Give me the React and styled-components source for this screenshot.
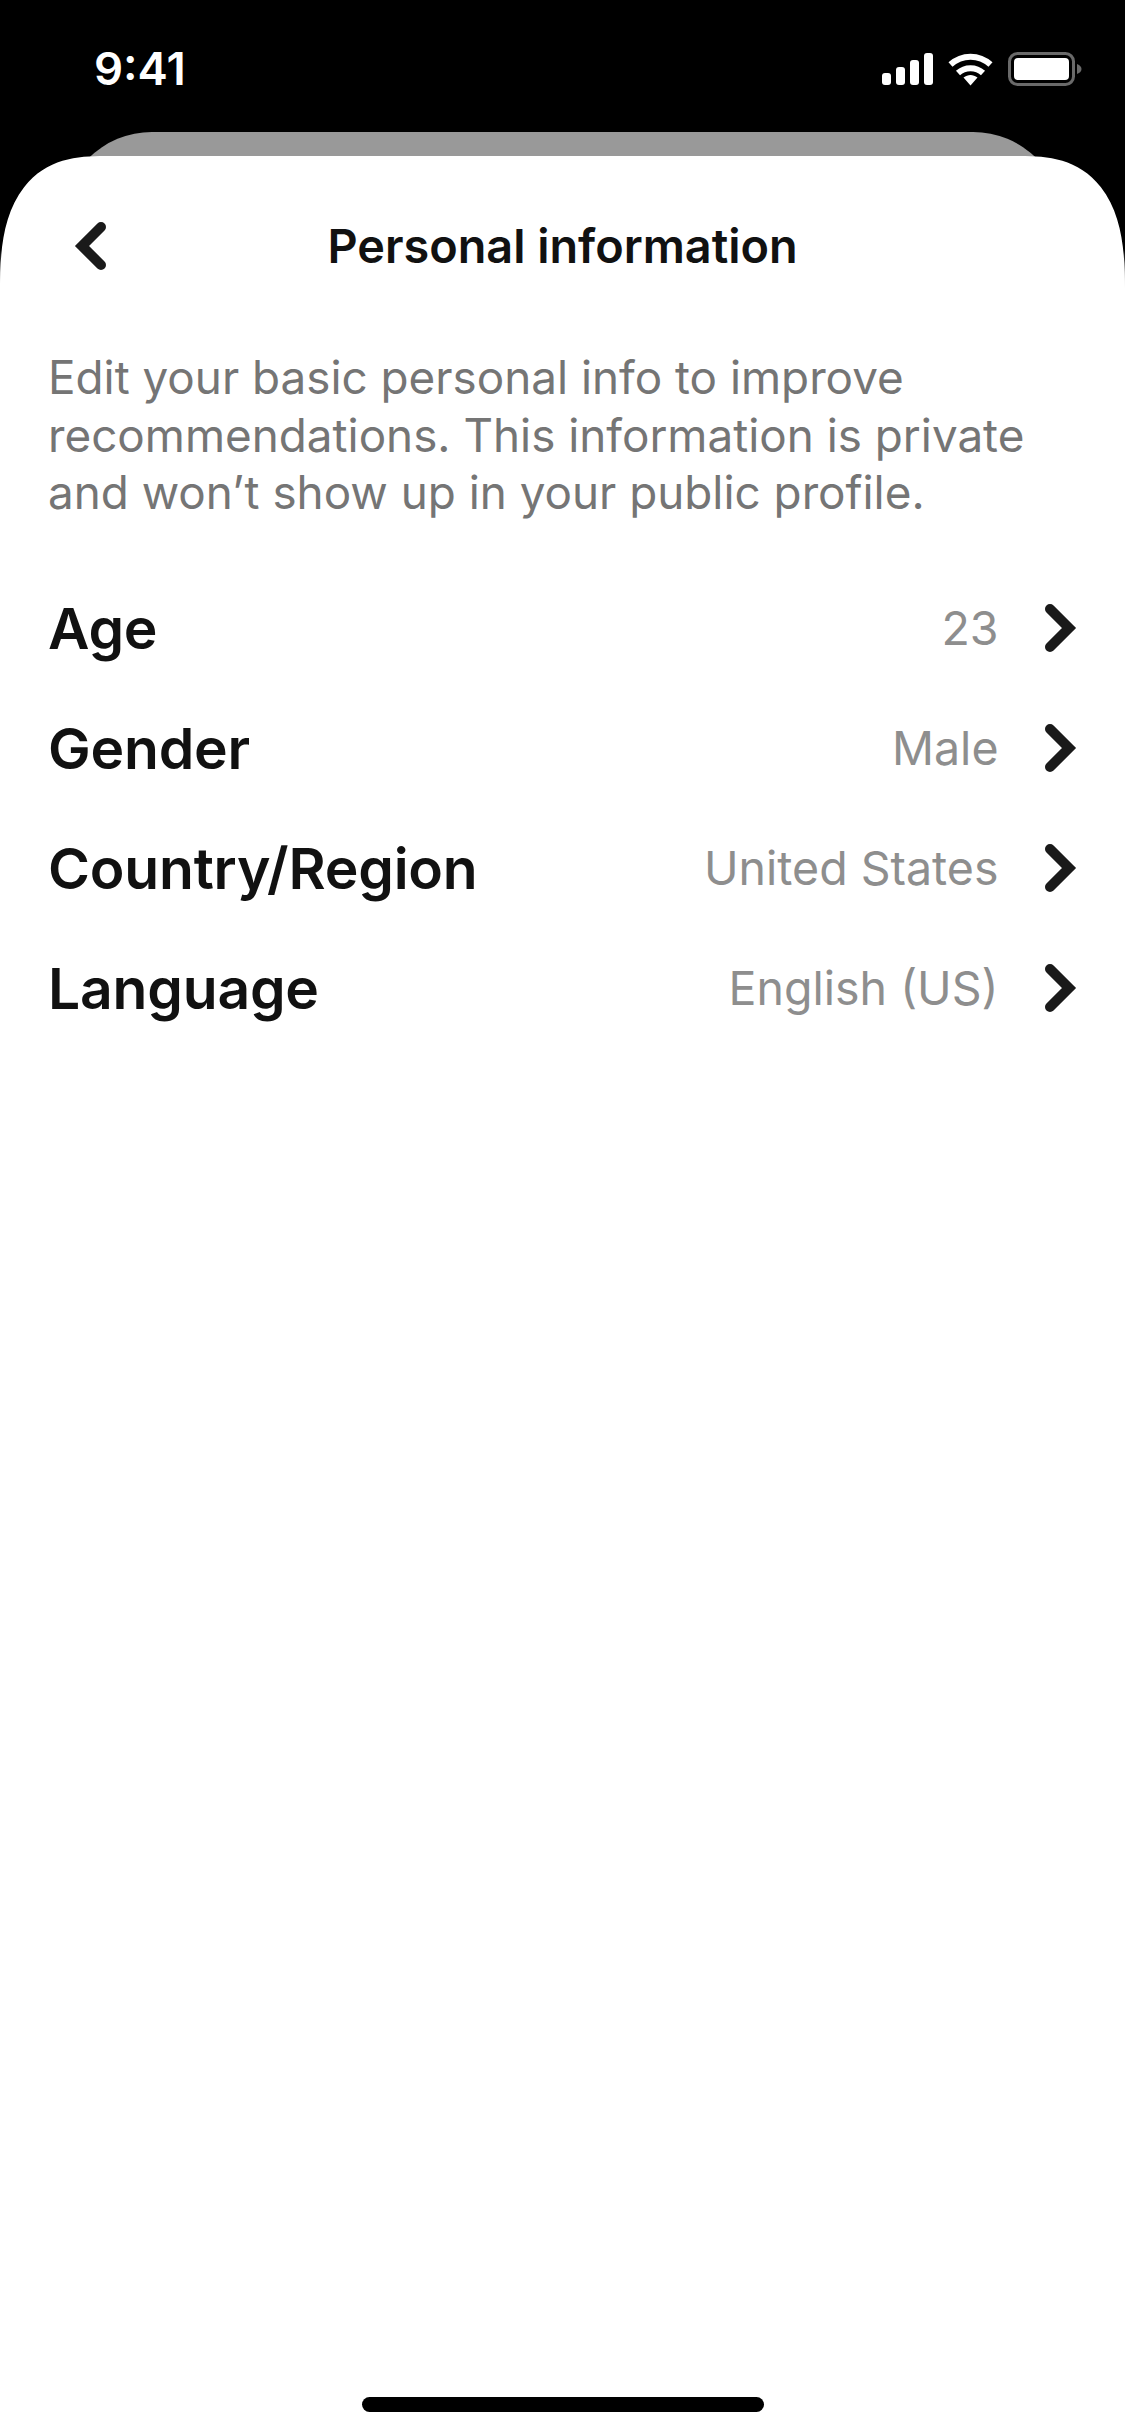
import styled, { createGlobalStyle } from "styled-components";

const GlobalStyle = createGlobalStyle`
  html, body {
    margin: 0;
    padding: 0;
    background: #fff;
  }
  * {
    box-sizing: border-box;
  }
`;

const Screen = styled.div`
  width: 1125px;
  height: 2436px;
  overflow: hidden;
  display: flex;
  flex-direction: column;
  font-family: Inter, "Liberation Sans", sans-serif;
  background: linear-gradient(#000 0, #000 250px, #fff 296px);
`;

const StatusBar = styled.div`
  height: 132px;
  flex: none;
  padding: 46px 43px 0 94px;
  display: flex;
  justify-content: space-between;
  align-items: flex-start;
`;

const Time = styled.span`
  font-size: 45.5px;
  line-height: 46px;
  font-weight: 600;
  color: #fff;
`;

const StatusIcons = styled.div`
  display: flex;
  align-items: center;
  gap: 15px;
  padding-top: 6px;
`;

const BackSheet = styled.div`
  flex: none;
  height: 120px;
  margin: 0 62px -96px;
  background: #999;
  border-radius: 90px 90px 0 0;
`;

const Sheet = styled.main`
  position: relative;
  flex: 1;
  display: flex;
  flex-direction: column;
  background: #fff;
  border-radius: 105px 105px 0 0 / 134px 134px 0 0;
  corner-shape: superellipse(1.4);
`;

const Header = styled.header`
  height: 180px;
  flex: none;
  padding: 0 48px;
  display: grid;
  grid-template-columns: 80px 1fr 80px;
  align-items: center;
`;

const BackIcon = styled.svg`
  width: 44px;
  height: 60px;
  margin-left: 23.5px;
`;

const Title = styled.h1`
  margin: 0;
  text-align: center;
  font-size: 46.8px;
  line-height: 56px;
  font-weight: 600;
  white-space: nowrap;
  color: #111;
`;

const Intro = styled.p`
  margin: 13px 0 0;
  padding: 0 48px;
  font-size: 45.8px;
  line-height: 57.5px;
  font-weight: 400;
  white-space: nowrap;
  color: #757575;
`;

const List = styled.div`
  margin-top: 47px;
  padding: 0 48px;
  display: flex;
  flex-direction: column;
`;

const Row = styled.div`
  height: 119.9px;
  display: flex;
  align-items: center;
  justify-content: space-between;
`;

const Label = styled.span`
  font-size: 57px;
  font-weight: 600;
  letter-spacing: -0.2px;
  color: #111;
`;

const RowValue = styled.div`
  display: flex;
  align-items: center;
  gap: 45.5px;
  margin-right: -3px;
`;

const Value = styled.span`
  font-size: 46.5px;
  font-weight: 400;
  color: #8e8e8e;
`;

const Chevron = styled.svg`
  width: 36px;
  height: 60px;
  flex: none;
`;

const HomeBar = styled.div`
  width: 402px;
  height: 15px;
  margin: auto auto 24px;
  background: #000;
  border-radius: 8px;
`;

const rows = [
  ["Age", "23"],
  ["Gender", "Male"],
  ["Country/Region", "United States"],
  ["Language", "English (US)"],
];

export default function App() {
  return (
    <Screen>
      <GlobalStyle />
      <StatusBar>
        <Time>9:41</Time>
        <StatusIcons>
          <svg width="51" height="32" viewBox="0 0 51 32" fill="#fff">
            <rect x="0" y="20" width="9" height="12" rx="3" />
            <rect x="14" y="14" width="9" height="18" rx="3" />
            <rect x="28" y="7" width="9" height="25" rx="3" />
            <rect x="42" y="0" width="9" height="32" rx="3" />
          </svg>
          <svg width="45" height="33" viewBox="0 0 45 33" fill="none" stroke="#fff" strokeWidth="6">
            <path d="M2.5 11.5C14 1 31 1 42.5 11.5" />
            <path d="M10 20C17 13.5 28 13.5 35 20" />
            <path d="M15.5 24.5L22.5 32.5L29.5 24.5C25 21 20 21 15.5 24.5Z" fill="#fff" stroke="none" />
          </svg>
          <svg width="74" height="34" viewBox="0 0 74 34" fill="none">
            <rect x="1.5" y="1.5" width="64" height="31" rx="8" stroke="#6a6a6a" strokeWidth="3" />
            <rect x="6" y="6" width="55" height="22" rx="4" fill="#fff" />
            <path d="M69 12C72 13 73.5 15 73.5 17C73.5 19 72 21 69 22Z" fill="#6a6a6a" />
          </svg>
        </StatusIcons>
      </StatusBar>
      <BackSheet />
      <Sheet>
        <Header>
          <BackIcon viewBox="0 0 44 60" fill="none" stroke="#1a1a1a" strokeWidth="10" strokeLinecap="round" strokeLinejoin="miter">
            <path d="M29 11L10 30L29 49" />
          </BackIcon>
          <Title>Personal information</Title>
        </Header>
        <Intro>
          Edit your basic personal info to improve
          <br />
          recommendations. This information is private
          <br />
          and won’t show up in your public profile.
        </Intro>
        <List>
          {rows.map(([label, value]) => (
            <Row key={label}>
              <Label>{label}</Label>
              <RowValue>
                <Value>{value}</Value>
                <Chevron viewBox="0 0 36 60" fill="none" stroke="#1a1a1a" strokeWidth="10" strokeLinecap="round" strokeLinejoin="miter">
                  <path d="M6 11L25 30L6 49" />
                </Chevron>
              </RowValue>
            </Row>
          ))}
        </List>
        <HomeBar />
      </Sheet>
    </Screen>
  );
}
